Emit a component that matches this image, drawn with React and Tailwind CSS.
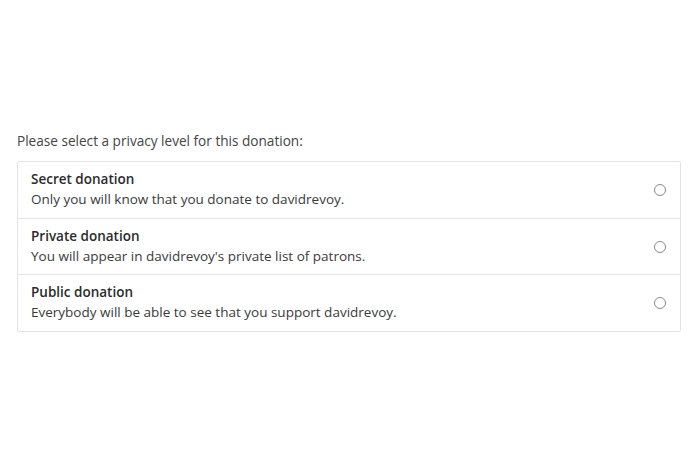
const options = [
  { title: "Secret donation", text: "Only you will know that you donate to davidrevoy." },
  { title: "Private donation", text: "You will appear in davidrevoy's private list of patrons." },
  { title: "Public donation", text: "Everybody will be able to see that you support davidrevoy." },
];

export default function App() {
  return (
    <div className="h-[460px] w-[690px] bg-white text-[#333] [font-family:'Open_Sans','DejaVu_Sans',sans-serif]">
      <div className="px-[17px] pt-[131px]">
        <p className="text-[13.6px] leading-[20px] text-[#444]">Please select a privacy level for this donation:</p>
        <div className="mt-[10px] w-[664px] rounded-[2px] border border-[#e3e3e3]">
          {options.map((o, i) => (
            <label
              key={o.title}
              className={`flex cursor-pointer items-center justify-between pl-[13px] pr-[14px] pt-[7px] ${i === 1 ? "pb-[7px]" : "pb-[8px]"} ${i > 0 ? "border-t border-[#e3e3e3]" : ""}`}
            >
              <div>
                <div className="text-[13.5px] font-semibold leading-[20px] text-[#2b2b2b]">{o.title}</div>
                <div className="text-[13.5px] leading-[21px] text-[#3a3a3a]">{o.text}</div>
              </div>
              <span className="h-[12px] w-[12px] rounded-full border border-[#888]" />
            </label>
          ))}
        </div>
      </div>
    </div>
  );
}
